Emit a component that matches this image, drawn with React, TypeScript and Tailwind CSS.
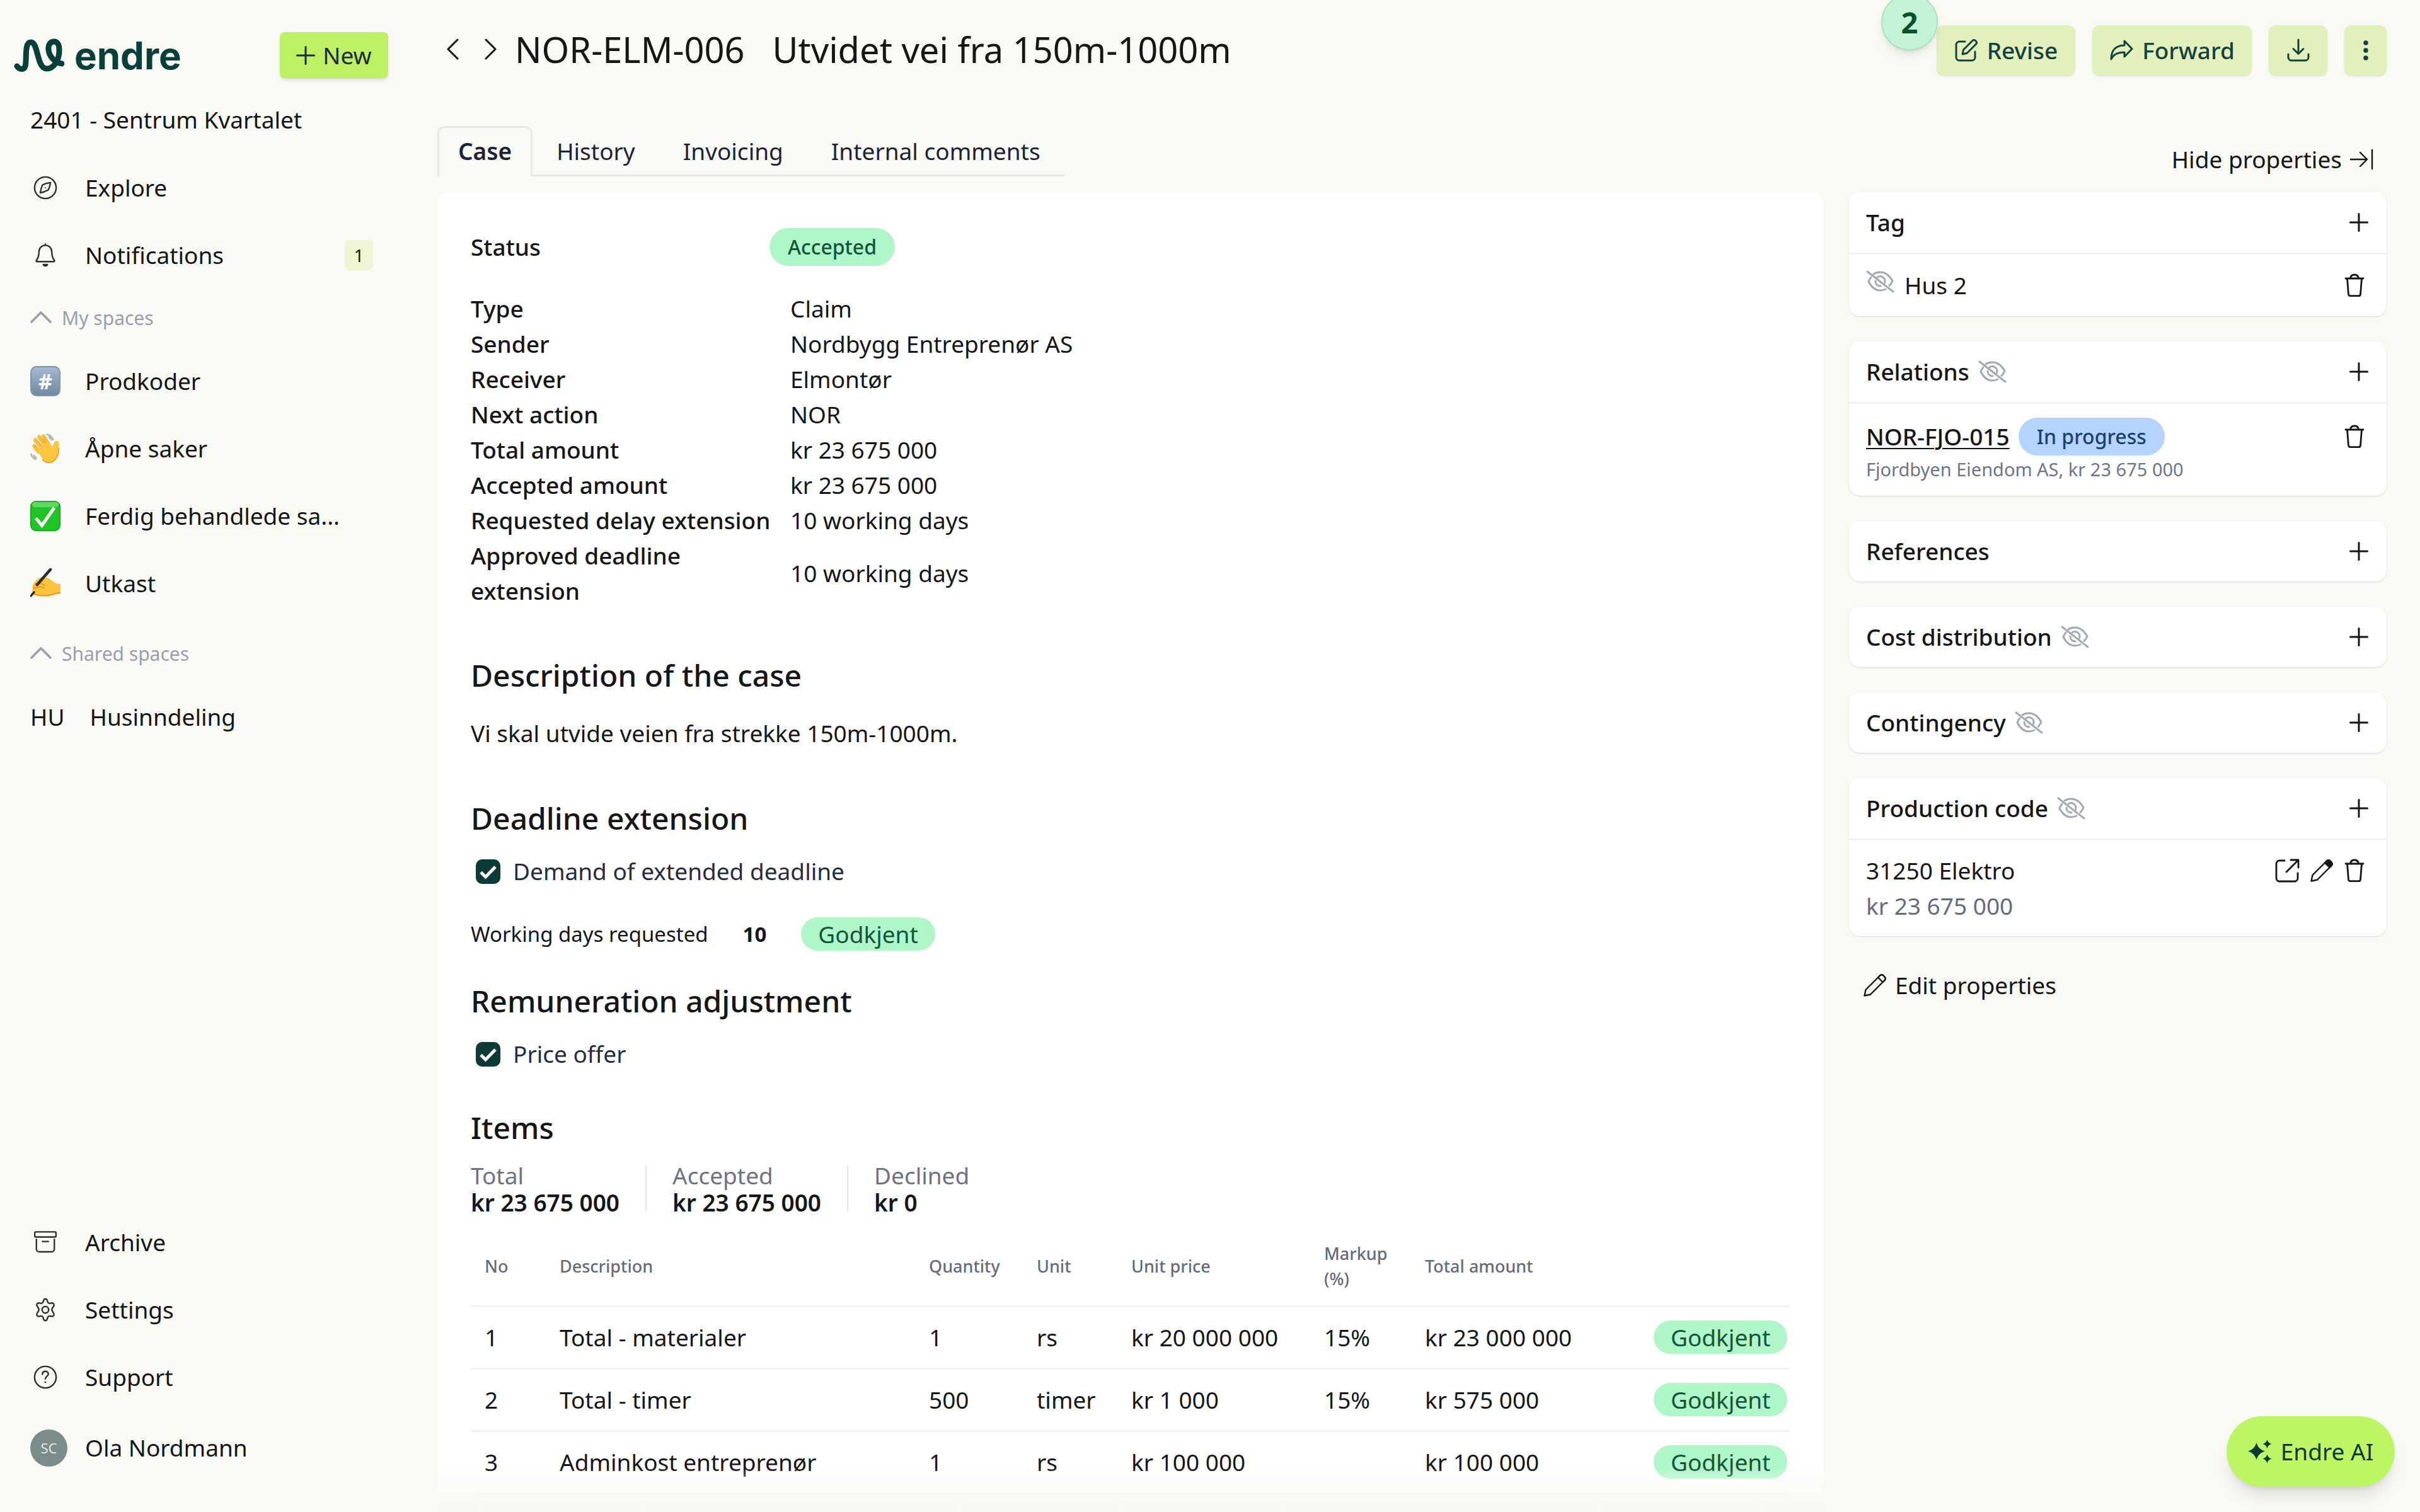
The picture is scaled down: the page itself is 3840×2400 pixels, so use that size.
import { ReactNode, useState } from "react";

interface IconProps {
  className?: string;
}

interface Item {
  no: number;
  description: string;
  quantity: number;
  unit: string;
  unitPrice: string;
  markup: string;
  total: string;
}

const details = [
  ["Type", "Claim"],
  ["Sender", "Nordbygg Entreprenør AS"],
  ["Receiver", "Elmontør"],
  ["Next action", "NOR"],
  ["Total amount", "kr 23 675 000"],
  ["Accepted amount", "kr 23 675 000"],
  ["Requested delay extension", "10 working days"],
  ["Approved deadline extension", "10 working days"],
];

const items: Item[] = [
  { no: 1, description: "Total - materialer", quantity: 1, unit: "rs", unitPrice: "kr 20 000 000", markup: "15%", total: "kr 23 000 000" },
  { no: 2, description: "Total - timer", quantity: 500, unit: "timer", unitPrice: "kr 1 000", markup: "15%", total: "kr 575 000" },
  { no: 3, description: "Adminkost entreprenør", quantity: 1, unit: "rs", unitPrice: "kr 100 000", markup: "", total: "kr 100 000" },
];

const tabs = ["Case", "History", "Invoicing", "Internal comments"];

const Svg: React.FC<{ box?: string; width?: number; className?: string; children: ReactNode }> = ({
  box = "0 0 16 16",
  width = 1,
  className = "size-[38px]",
  children,
}) => (
  <svg
    viewBox={box}
    className={className}
    fill="none"
    stroke="currentColor"
    strokeWidth={width}
    strokeLinecap="round"
    strokeLinejoin="round"
    aria-hidden="true"
  >
    {children}
  </svg>
);

const CompassIcon = () => (
  <Svg>
    <circle cx="8" cy="8" r="7.2" />
    <path d="M11.4 4.6c-.2 1.6-.6 3.3-1.5 4.9-1.6.9-3.3 1.6-5.3 1.9.2-1.8.7-3.6 1.5-5.3 1.7-.9 3.4-1.3 5.3-1.5Z" />
    <circle cx="8" cy="8" r=".4" fill="currentColor" stroke="none" />
  </Svg>
);

const BellIcon = () => (
  <Svg>
    <path d="M8 1.4c-2.7 0-4.3 2-4.3 4.6 0 2.6-.5 4-1.7 5.6-.3.4 0 .7.4.7h11.2c.4 0 .7-.3.4-.7-1.2-1.6-1.7-3-1.7-5.6C12.300 3.400 10.700 1.400 8 1.400ZM8 1.400V.6M6.600 14.300c.3.600.8.900 1.400.9s1.100-.3 1.400-.9Z" />
  </Svg>
);

const ArchiveIcon = () => (
  <Svg>
    <rect x=".9" y="1" width="14.200" height="3.400" rx=".7" />
    <path d="M2 6v6.500A1.800 1.800 0 0 0 3.800 14.300h8.400A1.800 1.800 0 0 0 14 12.500V6M6 7.400h4" />
  </Svg>
);

const GearIcon = () => (
  <Svg>
    <path d="M6.800 1.700c.4-1.300 2-1.300 2.400 0l.4 1.200c.2.600.8.900 1.400.8l1.200-.2c1.300-.2 2 1.100 1.300 2.100l-.8 1.200c-.4.600-.4 1.600 0 2.200l.8 1.300c.7 1-.1 2.300-1.300 2.100l-1.200-.2c-.6-.1-1.200.2-1.400.8l-.4 1.300c-.4 1.300-2 1.300-2.400 0l-.4-1.300c-.2-.6-.8-.9-1.400-.8l-1.200.2c-1.200.2-2-1.100-1.300-2.100l.8-1.300c.4-.6.4-1.600 0-2.200l-.8-1.200c-.7-1 0-2.300 1.300-2.100l1.200.2c.6.100 1.200-.2 1.400-.8Z" />
    <circle cx="8" cy="8" r="2.200" />
  </Svg>
);

const HelpIcon = () => (
  <Svg>
    <circle cx="8" cy="8" r="7.200" />
    <path d="M6 6.100c0-1.300.9-2 2-2s2 .7 2 1.800c0 1.400-2 1.500-2 3.200" />
    <circle cx="8" cy="11.400" r=".6" fill="currentColor" stroke="none" />
  </Svg>
);

const ChevronUp = () => (
  <Svg box="0 0 34 20" width={3.6} className="mb-1 h-5 w-[34px]">
    <path d="m2 18 15-15 15 15" />
  </Svg>
);

const PlusIcon: React.FC<IconProps> = ({ className = "size-[30px]" }) => (
  <Svg width={1.6} className={className}>
    <path d="M8 .8v14.400M.8 8h14.400" />
  </Svg>
);

const HiddenIcon = () => (
  <Svg box="0 0 45 36" width={3} className="h-9 w-[45px] shrink-0 text-[#a3a8b5]">
    <path d="M2 2l41 32" />
    <path d="M12 6c3-2 6.500-3 10.500-3 8 0 14.500 5 19.500 14-1.300 3-3 5.300-5 7.500M31 30c-2.600 1.200-5.500 2-8.500 2-8 0-14-5-18.500-14 1-2.800 2.300-5 4-7" />
    <path d="M18 11c5-3.500 12 0 12 6.500 0 1-.2 1.800-.5 2.500M15 17c0 5 3.500 8 8 8" />
  </Svg>
);

const TrashIcon = () => (
  <Svg box="0 0 32 38" width={2.800} className="h-[38px] w-8">
    <path d="M2 8h28M4.500 8l2 25a3 3 0 0 0 3 2.700h13a3 3 0 0 0 3-2.700l2-25M9.500 8c.5-4 3-6 6.500-6s6 2 6.500 6" />
  </Svg>
);

const PencilIcon: React.FC<{ solidTip?: boolean }> = ({ solidTip }) => (
  <Svg box="0 0 37 38" width={2.4} className="h-[38px] w-[37px]">
    <path d="m2.500 35.500 2-9.500L27 3.500c1.500-1.500 4-1.500 5.500 0l2 2c1.500 1.500 1.500 4 0 5.500L12 33.500Z" />
    <path d="m24 6.500 7.500 7.500 3-3c1.500-1.500 1.500-4 0-5.500l-2-2c-1.500-1.500-4-1.500-5.500 0Z" fill={solidTip ? "currentColor" : "none"} />
  </Svg>
);

const ExternalIcon = () => (
  <Svg box="0 0 39 38" width={2.8} className="h-[38px] w-[39px]">
    <path d="M15 3H7a5 5 0 0 0-5 5v23a5 5 0 0 0 5 5h24a5 5 0 0 0 5-5v-8" />
    <path d="M25 2h12v12M37 2 18 21" />
  </Svg>
);

const ReviseIcon = () => (
  <Svg box="0 0 38 38" width={3}>
    <path d="M17 5H8a5 5 0 0 0-5 5v20a5 5 0 0 0 5 5h20a5 5 0 0 0 5-5v-9" />
    <path d="m13 25 1.500-7L29 3.500c1.300-1.300 3.200-1.300 4.500 0l1 1c1.300 1.300 1.300 3.200 0 4.500L20 23.500Z" />
  </Svg>
);

const ForwardIcon = () => (
  <Svg box="0 0 38 38" width={3}>
    <path d="M24 4v7C11 11 3 18 3 33c3-7 9-11 21-11v7l12-12.500Z" />
  </Svg>
);

const DownloadIcon = () => (
  <Svg box="0 0 38 38" width={3}>
    <path d="M19 2v22M11 16.500l8 8 8-8M3 25v5a5 5 0 0 0 5 5h22a5 5 0 0 0 5-5v-5" />
  </Svg>
);

const SparkleIcon = () => (
  <svg viewBox="0 0 38 38" className="size-[38px]" fill="currentColor" aria-hidden="true">
    <path d="M13.500 5c2.500 7.500 6 11 13.500 13.500-7.500 2.500-11 6-13.500 13.500C11 24.500 7.500 21 0 18.500 7.500 16 11 12.500 13.500 5Z" />
    <path d="M30.500 0c1.300 4 3 5.700 7 7-4 1.300-5.700 3-7 7-1.300-4-3-5.700-7-7 4-1.300 5.700-3 7-7ZM30.500 23.500c1.300 4 3 5.700 7 7-4 1.300-5.700 3-7 7-1.300-4-3-5.700-7-7 4-1.300 5.700-3 7-7Z" />
  </svg>
);

const LogoMark = () => (
  <Svg box="0 0 80 54" width={9} className="h-[54px] w-20">
    <path d="M5 44c3 5 11 7 13 0 3-10-2-38 9-38 12 0 9 42 25 42 12 0 20-14 20-29 0-9-3-14-8-14-6 0-10 5-9 13 1 10 9 20 21 22" />
  </Svg>
);

const KeycapEmoji = () => (
  <span className="flex size-12 items-center justify-center rounded-[10px] border-2 border-[#7f95ae] bg-linear-to-b from-[#a3b9d2] to-[#7488a0] text-[34px] font-bold text-white">
    #
  </span>
);

const CheckEmoji = () => (
  <svg viewBox="0 0 48 48" className="size-12" aria-hidden="true">
    <rect width="48" height="48" rx="9" fill="#13a51c" />
    <rect x="1.500" y="1.500" width="45" height="45" rx="8" fill="#1fc425" />
    <rect x="3" y="2" width="42" height="8" rx="5" fill="#5fd964" />
    <path d="M9 27.500 18.500 39 38 11" fill="none" stroke="#fff" strokeWidth="5" />
  </svg>
);

const WaveEmoji = () => (
  <svg viewBox="0 0 48 48" className="size-12" aria-hidden="true" strokeLinecap="round" fill="none">
    <path d="M27 1.500c4 1 7 4 9 8M30 6c1.500.7 2.500 2 3.500 4M1.500 33c1 4 3.500 6.500 7 8M6 35c.8 1.800 2 3 3.500 4" stroke="#b7b9bc" strokeWidth="3" />
    <path d="M13 29 6.500 20M19 24 8 10.500M24 19 14 5.500M29 17 21 4.500" stroke="#f6bd3a" strokeWidth="6" />
    <path d="M11 26 26 12l10 9c1-4 2-9 6-9 5 0 4 5 3.500 10-.5 10-2 18-8 22-7 4-14 2-18-3Z" fill="#fcc63f" />
    <path d="M20 42c6 6 14 5 19 0 4-4 6-11 6.500-18" stroke="#eda32c" strokeWidth="2" />
    <path d="m12 23-3-4M18 19l-5-6M24 15l-4-6" stroke="#e9a02b" strokeWidth="1.200" />
  </svg>
);

const WriteEmoji = () => (
  <svg viewBox="0 0 48 48" className="size-12" aria-hidden="true" strokeLinecap="round" fill="none">
    <path d="M4 27c4-8 10-13 16-13 8 0 14 5 20 10l8 1v14l-8 1c-9 4-26 5-34 1-5-2-3-7-1-9-2-1-2-3-1-5Z" fill="#fcc23a" />
    <path d="M5 32c6-3 12-3 17-1M6 41c10 4 25 3 34-1l8-1" stroke="#e39a25" strokeWidth="2" />
    <path d="M8 25c6-2 11-1 15 2" stroke="#e39a25" strokeWidth="2" />
    <path d="M32 2 11 26" stroke="#2b2b2d" strokeWidth="4.500" />
    <path d="m6 38-5 6" stroke="#2b2b2d" strokeWidth="3.500" />
  </svg>
);

const NavItem: React.FC<{ icon: ReactNode; label: string; badge?: string }> = ({ icon, label, badge }) => (
  <a href="#" className="flex h-[107px] items-center gap-[39px]">
    <span className="flex w-12 shrink-0 justify-center text-[#2f2f2f]">{icon}</span>
    <span className="truncate">{label}</span>
    {badge && (
      <span className="mr-12 ml-auto flex h-12 w-[45px] items-center justify-center rounded-lg bg-[#eef5d3] text-[28px]">
        {badge}
      </span>
    )}
  </a>
);

const Section: React.FC<{ label: string }> = ({ label }) => (
  <button className="flex h-[93px] w-full items-center gap-4 text-[30px] text-[#9b9eae]">
    <ChevronUp />
    {label}
  </button>
);

const Approved = () => (
  <span className="inline-flex h-[53px] items-center rounded-full bg-[#aff6c8] px-[27px] text-[#12553a]">Godkjent</span>
);

const Sidebar = () => (
  <aside className="flex w-[694px] shrink-0 flex-col pr-[54px] pl-12 text-[#151515]">
    <div className="mt-[51px] flex h-[73px] items-center justify-between pr-6">
      <a href="#" className="-ml-[26px] flex items-center gap-4 text-[#07403a]">
        <LogoMark />
        <span className="font-['Inter'] text-[60px] leading-none font-bold">endre</span>
      </a>
      <button className="flex h-full w-[172px] items-center justify-center gap-3 rounded-lg bg-[#bdf163] text-[#1f2a3a] shadow-md">
        <PlusIcon />
        New
      </button>
    </div>
    <p className="mt-[38px] mb-[26px]">2401 - Sentrum Kvartalet</p>
    <nav>
      <NavItem icon={<CompassIcon />} label="Explore" />
      <NavItem icon={<BellIcon />} label="Notifications" badge="1" />
      <Section label="My spaces" />
      <div className="pr-12">
        <NavItem icon={<KeycapEmoji />} label="Prodkoder" />
        <NavItem icon={<WaveEmoji />} label="Åpne saker" />
        <NavItem icon={<CheckEmoji />} label="Ferdig behandlede sa..." />
        <NavItem icon={<WriteEmoji />} label="Utkast" />
      </div>
      <div className="mt-3">
        <Section label="Shared spaces" />
      </div>
      <a href="#" className="flex h-[107px] items-center gap-10">
        <span>HU</span>
        <span>Husinndeling</span>
      </a>
    </nav>
    <nav className="mt-auto mb-[43px]">
      <NavItem icon={<ArchiveIcon />} label="Archive" />
      <NavItem icon={<GearIcon />} label="Settings" />
      <NavItem icon={<HelpIcon />} label="Support" />
      <a href="#" className="flex h-[118px] items-center gap-7">
        <span className="flex size-[59px] items-center justify-center rounded-full bg-[#7a8d8a] text-[22px] text-[#dfe7e4]">
          SC
        </span>
        Ola Nordmann
      </a>
    </nav>
  </aside>
);

const actionClass = "flex h-20 items-center justify-center rounded-xl bg-[#e2f0bc] font-medium text-[#14433f] shadow-sm";

const Header = () => (
  <header className="flex h-[200px] items-start justify-between pt-10">
    <div className="flex h-[76px] items-center">
      <button aria-label="Previous case" className="ml-[14px]">
        <Svg box="0 0 20 34" width={3} className="h-[34px] w-5"><path d="M18 2 3 17l15 15" /></Svg>
      </button>
      <button aria-label="Next case" className="ml-[41px]">
        <Svg box="0 0 20 34" width={3} className="h-[34px] w-5"><path d="m2 2 15 15L2 32" /></Svg>
      </button>
      <h1 className="ml-7 flex gap-11 text-[56px] leading-[72px]">
        <span>NOR-ELM-006</span>
        <span>Utvidet vei fra 150m-1000m</span>
      </h1>
    </div>
    <div className="flex gap-[27px]">
      <div className="relative">
        <button className={`${actionClass} w-[220px] gap-[14px]`}>
          <ReviseIcon />
          Revise
        </button>
        <span className="absolute -top-[50px] -left-[88px] flex size-[90px] items-center justify-center rounded-full border-2 border-[#a9e3c2] bg-[#c5f3d7] text-[47px] font-bold text-[#08522b] shadow-lg">
          2
        </span>
      </div>
      <button className={`${actionClass} w-[253px] gap-[14px]`}>
        <ForwardIcon />
        Forward
      </button>
      <button aria-label="Download" className={`${actionClass} w-[93px]`}>
        <DownloadIcon />
      </button>
      <button aria-label="More" className={`${actionClass} w-[67px]`}>
        <svg viewBox="0 0 8 32" className="h-8 w-2" fill="currentColor" aria-hidden="true">
          <circle cx="4" cy="4" r="3.800" />
          <circle cx="4" cy="16" r="3.800" />
          <circle cx="4" cy="28" r="3.800" />
        </svg>
      </button>
    </div>
  </header>
);

const Tabs = () => {
  const [active, setActive] = useState("Case");

  return (
    <div role="tablist" className="mb-[25px] flex h-20 w-fit text-[#1c2338]">
      {tabs.map((tab) => (
        <button
          key={tab}
          role="tab"
          aria-selected={tab === active}
          onClick={() => setActive(tab)}
          className={
            tab === active
              ? "rounded-t-xl border-[3px] border-b-0 border-[#e8e9e4] px-[30px] pb-[3px] font-semibold"
              : "border-b-[3px] border-[#e8e9e4] px-[38px] pt-[3px]"
          }
        >
          {tab}
        </button>
      ))}
    </div>
  );
};

const Check: React.FC<{ id: string; label: string }> = ({ id, label }) => (
  <div className="mt-6 flex items-center gap-5 pl-2">
    <span className="relative flex">
      <input
        id={id}
        type="checkbox"
        defaultChecked
        className="peer size-[39px] appearance-none rounded-[10px] border-2 border-[#0c3b37] checked:bg-[#0c3b37]"
      />
      <svg viewBox="0 0 39 39" className="pointer-events-none absolute inset-0 hidden size-[39px] peer-checked:block" fill="none" stroke="#fff" strokeWidth="5" aria-hidden="true">
        <path d="m8 20.500 7.500 7.500L31 12" />
      </svg>
    </span>
    <label htmlFor={id} className="text-[#252b45]">{label}</label>
  </div>
);

const Heading: React.FC<{ className?: string; children: ReactNode }> = ({ className = "", children }) => (
  <h2 className={`text-[48px] leading-[65px] font-medium ${className}`}>{children}</h2>
);

const Sum: React.FC<{ label: string; value: string }> = ({ label, value }) => (
  <div className="leading-[43px]">
    <dt className="text-[#6f7284]">{label}</dt>
    <dd className="font-semibold">{value}</dd>
  </div>
);

const ItemsTable = () => (
  <table className="mt-[18px] w-full table-fixed text-left">
    <thead>
      <tr className="h-[125px] border-b-[3px] border-[#f1f1f3] text-[27px] leading-10 text-[#666a7c] *:px-[22px] *:font-medium">
        <th className="w-[119px]">No</th>
        <th>Description</th>
        <th className="w-[171px]">Quantity</th>
        <th className="w-[150px]">Unit</th>
        <th className="w-[306px]">Unit price</th>
        <th className="w-[160px]">Markup (%)</th>
        <th className="w-[363px]">Total amount</th>
        <th className="w-[238px]"></th>
      </tr>
    </thead>
    <tbody>
      {items.map((item) => (
        <tr key={item.no} className="h-[99px] border-b-[3px] border-[#f1f1f3] *:pl-[22px]">
          <td>{item.no}</td>
          <td>{item.description}</td>
          <td>{item.quantity}</td>
          <td>{item.unit}</td>
          <td>{item.unitPrice}</td>
          <td>{item.markup}</td>
          <td>{item.total}</td>
          <td>
            <span className="flex"><Approved /></span>
          </td>
        </tr>
      ))}
    </tbody>
  </table>
);

const CasePanel = () => (
  <section className="flex-1 rounded-t-[20px] bg-white px-[53px] pt-[57px]">
    <div className="flex h-[60px] items-center">
      <span className="w-[474px] font-medium">Status</span>
      <span className="flex h-[60px] items-center rounded-full bg-[#aff6c8] px-[29px] text-[32px] font-medium text-[#12553a]">
        Accepted
      </span>
    </div>
    <table className="mt-10 text-left">
      <tbody>
        {details.map(([label, value]) => (
          <tr key={label}>
            <th className="w-[507px] pr-5 font-medium">{label}</th>
            <td>{value}</td>
          </tr>
        ))}
      </tbody>
    </table>
    <Heading className="mt-[73px]">Description of the case</Heading>
    <p className="mt-8">Vi skal utvide veien fra strekke 150m-1000m.</p>
    <Heading className="mt-[74px]">Deadline extension</Heading>
    <Check id="deadline" label="Demand of extended deadline" />
    <div className="mt-[45px] flex h-[53px] items-center">
      <span className="text-[33px]">Working days requested</span>
      <span className="mx-[55px] text-[33px] font-bold">10</span>
      <Approved />
    </div>
    <Heading className="mt-[47px]">Remuneration adjustment</Heading>
    <Check id="offer" label="Price offer" />
    <Heading className="mt-[56px]">Items</Heading>
    <dl className="mt-[22px] flex items-center gap-[41px]">
      <Sum label="Total" value="kr 23 675 000" />
      <div className="h-[72px] w-[2px] bg-[#e4e5e9]" />
      <Sum label="Accepted" value="kr 23 675 000" />
      <div className="h-[72px] w-[2px] bg-[#e4e5e9]" />
      <Sum label="Declined" value="kr 0" />
    </dl>
    <ItemsTable />
  </section>
);

const Card: React.FC<{ title: string; hidden?: boolean; children?: ReactNode }> = ({ title, hidden, children }) => (
  <section className="mb-10 rounded-[18px] bg-white shadow-sm">
    <div className="flex h-24 items-center gap-[14px] pr-[29px] pl-[27px]">
      <h3 className="font-medium">{title}</h3>
      {hidden && <HiddenIcon />}
      <button aria-label={`Add ${title}`} className="ml-auto">
        <PlusIcon />
      </button>
    </div>
    {children && <div className="border-t-[3px] border-[#f3f3f4] pr-[35px] pl-[27px]">{children}</div>}
  </section>
);

const Properties = () => (
  <aside className="w-[853px] shrink-0 pt-[25px]">
    <button className="mr-[21px] mb-6 ml-auto flex items-center gap-3">
      Hide properties
      <Svg box="0 0 38 34" width={2.4} className="h-[34px] w-[38px]">
        <path d="M2 17h26M17 6l11 11-11 11M36 2v30" />
      </Svg>
    </button>
    <Card title="Tag">
      <div className="flex h-[98px] items-center">
        <span className="mb-3"><HiddenIcon /></span>
        <span className="ml-4">Hus 2</span>
        <button aria-label="Delete tag" className="ml-auto"><TrashIcon /></button>
      </div>
    </Card>
    <Card title="Relations" hidden>
      <div className="pt-[22px] pb-5">
        <div className="flex h-[60px] items-center">
          <a href="#" className="font-medium underline decoration-2 underline-offset-4">NOR-FJO-015</a>
          <span className="ml-[14px] flex h-[60px] items-center rounded-full bg-[#b5d3ff] px-[29px] text-[32px] font-medium text-[#174468]">
            In progress
          </span>
          <button aria-label="Delete relation" className="ml-auto"><TrashIcon /></button>
        </div>
        <p className="text-[29px] leading-[44px] text-[#70748a]">Fjordbyen Eiendom AS, kr 23 675 000</p>
      </div>
    </Card>
    <Card title="References" />
    <Card title="Cost distribution" hidden />
    <Card title="Contingency" hidden />
    <Card title="Production code" hidden>
      <div className="pt-5 pb-5">
        <div className="flex items-center">
          <span>31250 Elektro</span>
          <button aria-label="Open" className="ml-auto"><ExternalIcon /></button>
          <button aria-label="Edit" className="mr-[18px] ml-4"><PencilIcon solidTip /></button>
          <button aria-label="Delete code"><TrashIcon /></button>
        </div>
        <p className="text-[#666a83]">kr 23 675 000</p>
      </div>
    </Card>
    <button className="mt-[50px] ml-[22px] flex items-center gap-[14px]">
      <PencilIcon />
      Edit properties
    </button>
  </aside>
);

const App = () => {
  return (
    <div className="relative flex h-screen overflow-hidden bg-[#f9faf4] font-['Noto_Sans',sans-serif] text-[37px] leading-[56px] text-[#161616]">
      <Sidebar />
      <div className="flex min-w-0 flex-1 flex-col pr-[53px]">
        <Header />
        <div className="flex min-h-0 flex-1 gap-[41px]">
          <main className="relative flex min-w-0 flex-1 flex-col">
            <Tabs />
            <CasePanel />
            {/* fades the panel out above the window edge */}
            <div className="pointer-events-none absolute inset-x-0 bottom-0 h-[70px] bg-linear-to-b from-transparent to-[#f9faf4] to-75%" />
          </main>
          <Properties />
        </div>
      </div>
      <button className="absolute right-10 bottom-10 flex h-28 w-[267px] items-center justify-center gap-[14px] rounded-full bg-[#bdf564] text-[#0b3b38] shadow-xl">
        <SparkleIcon />
        Endre AI
      </button>
    </div>
  );
};

export default App;
